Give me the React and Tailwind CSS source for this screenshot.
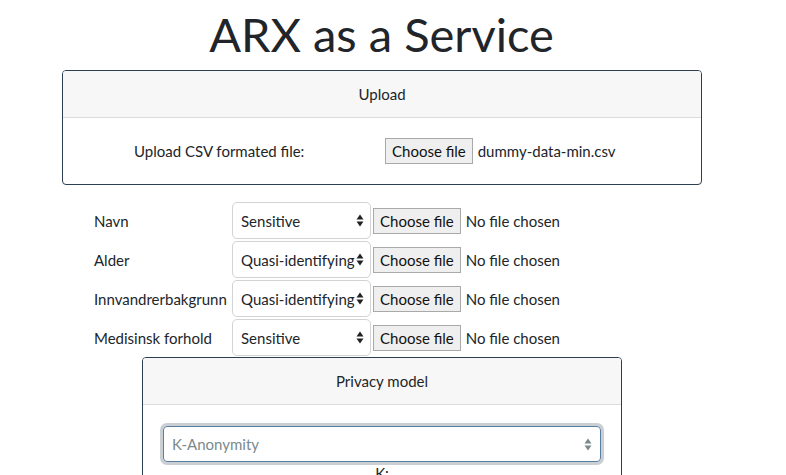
import React from 'react';

const rows = [
  { name: 'Navn', type: 'Sensitive' },
  { name: 'Alder', type: 'Quasi-identifying' },
  { name: 'Innvandrerbakgrunn', type: 'Quasi-identifying' },
  { name: 'Medisinsk forhold', type: 'Sensitive' },
];

const Arrows = ({ color = '#222' }) => (
  <svg width="8" height="13" viewBox="0 0 8 13" className="shrink-0">
    <path d="M4 0.5 L7.5 5.5 L0.5 5.5 Z" fill={color} />
    <path d="M4 12.5 L7.5 7.5 L0.5 7.5 Z" fill={color} />
  </svg>
);

const FileButton = () => (
  <span className="inline-flex items-center h-[26px] px-[6px] bg-[#efefef] border border-[#a9a9a9] text-[#111]">
    Choose file
  </span>
);

const Card = ({ title, className, children }) => (
  <div className={`border border-[#2c3e50] rounded-[4px] overflow-hidden ${className}`}>
    <div className="h-[47px] flex items-center justify-center bg-[#f7f7f7] border-b border-[#dcdcdc]">
      {title}
    </div>
    {children}
  </div>
);

export default function App() {
  return (
    <div
      className="min-h-screen bg-white text-[#212529] text-[15px] leading-[1.5]"
      style={{ fontFamily: 'Lato, "Open Sans", sans-serif' }}
    >
      <div className="w-[763px]">
        <h1 className="pt-[6px] mb-2 text-center text-[47px] leading-[1.2] font-normal">ARX as a Service</h1>

        <Card title="Upload" className="ml-[62px] w-[640px]">
          <div className="py-5 flex items-center">
            <span className="ml-[71px] w-[251px]">Upload CSV formated file:</span>
            <FileButton />
            <span className="ml-[5px]">dummy-data-min.csv</span>
          </div>
        </Card>

        <div className="ml-[94px] mt-[16px]">
          {rows.map((r) => (
            <div key={r.name} className="h-[39px] flex items-center">
              <span className="w-[138px] whitespace-nowrap">{r.name}</span>
              <div className="w-[139px] h-[37px] flex items-center justify-between pl-[8px] pr-[6px] border border-[#d3d3d3] rounded-[5px] bg-white">
                <span className="whitespace-nowrap">{r.type}</span>
                <Arrows />
              </div>
              <div className="ml-[2px]">
                <FileButton />
              </div>
              <span className="ml-[5px]">No file chosen</span>
            </div>
          ))}
        </div>

        <Card title="Privacy model" className="ml-[142px] w-[480px]">
          <div className="px-5 pt-5">
            <div className="h-[36px] mt-[1px] flex items-center justify-between pl-[8px] pr-[8px] border border-[#597ea2] rounded-[4px] shadow-[0_0_0_3px_rgba(44,62,80,0.25)]">
              <span className="text-[#7b8a8b]">K-Anonymity</span>
              <Arrows color="#7b8a8b" />
            </div>
            <div className="text-center">K:</div>
          </div>
        </Card>
      </div>
    </div>
  );
}
